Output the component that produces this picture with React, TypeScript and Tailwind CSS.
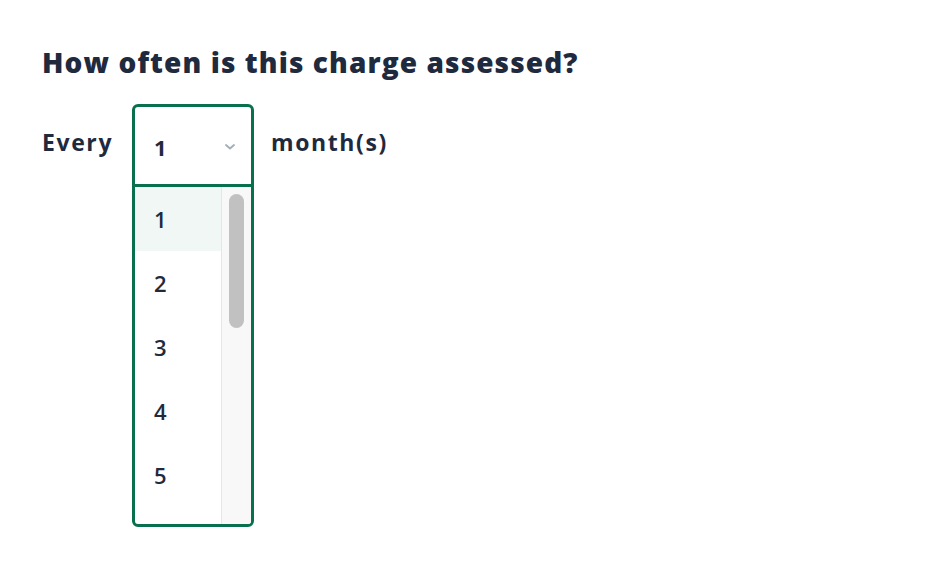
import React from "react";

export default function App() {
  const items = ["1", "2", "3", "4", "5"];
  return (
    <div
      className="w-[948px] h-[564px] bg-white text-[#1f2a3e]"
      style={{ fontFamily: "'Open Sans', 'Noto Sans', sans-serif" }}
    >
      <div className="pl-[42px] pt-[42px]">
        <h1 className="text-[28px] leading-[40px] font-extrabold tracking-[1.1px]">
          How often is this charge assessed?
        </h1>
        <div className="flex items-start mt-[22px]">
          <div className="pt-[22px] text-[23px] font-bold leading-[32px] w-[90px] tracking-[1.6px]">Every</div>
          <div className="w-[122px] flex flex-col">
            <div className="h-[83px] border-[3px] border-[#09704f] rounded-t-[6px] flex items-center pl-[19px] pr-[16px]">
              <span className="text-[22px] font-bold flex-1 leading-none mt-[2px]">1</span>
              <svg width="10" height="6" viewBox="0 0 10 6" className="mt-[2px]">
                <path d="M1 1 L5 4.5 L9 1" stroke="#a3adb8" strokeWidth="1.8" fill="none" strokeLinecap="round" strokeLinejoin="round" />
              </svg>
            </div>
            <div className="h-[343px] -mt-[3px] border-[3px] border-[#09704f] rounded-b-[6px] flex overflow-hidden">
              <div className="flex-1 flex flex-col">
                {items.map((n, i) => (
                  <div
                    key={n}
                    className={`h-[64px] flex items-center pl-[19px] text-[22px] font-semibold ${
                      i === 0 ? "bg-[#f1f7f4]" : "bg-white"
                    }`}
                  >
                    {n}
                  </div>
                ))}
              </div>
              <div className="w-[30px] bg-[#f8f8f8] border-l border-[#e6e6e6] flex justify-center pt-[7px]">
                <div className="w-[15px] h-[134px] rounded-full bg-[#c1c1c1]" />
              </div>
            </div>
          </div>
          <div className="pt-[22px] pl-[17px] text-[23px] font-bold leading-[32px] tracking-[1.6px]">month(s)</div>
        </div>
      </div>
    </div>
  );
}
